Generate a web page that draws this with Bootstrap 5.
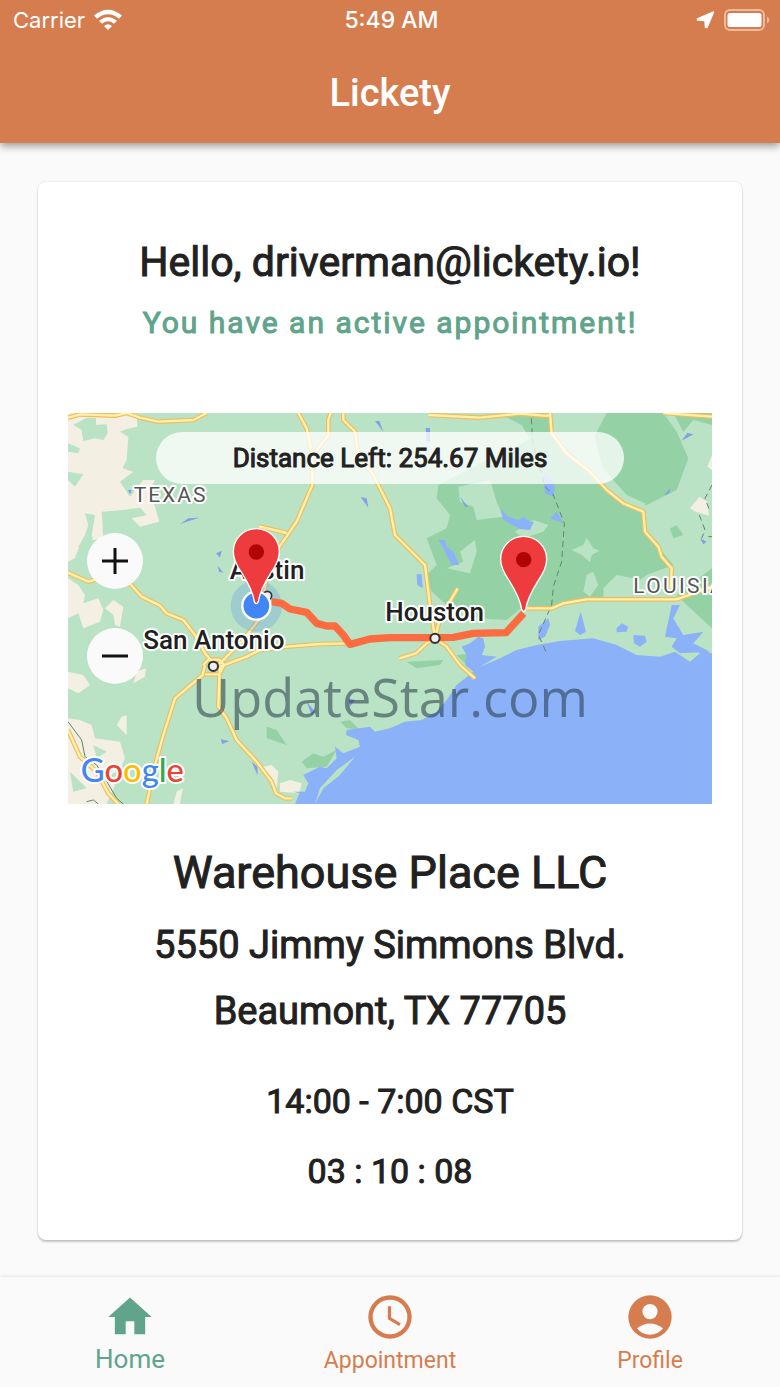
<!DOCTYPE html>
<html lang="en">
<head>
<meta charset="utf-8">
<meta name="viewport" content="width=device-width, initial-scale=1">
<title>Lickety</title>
<link href="https://cdn.jsdelivr.net/npm/bootstrap@5.3.0/dist/css/bootstrap.min.css" rel="stylesheet">
<style>
  :root { --clay: #d67d4f; --sage: #5fa48b; --ink: #212121; }
  body { font-family: Roboto, "Liberation Sans", sans-serif; background: #fafafa; color: var(--ink); }
  .app-header { background: var(--clay); color: #fff; box-shadow: 0 3px 8px rgba(0,0,0,.4); z-index: 1; }
  .status { font: 400 22px/40px Inter, sans-serif; padding: 0 10px 0 13px; }
  .status > * { flex: 1 1 0; }
  .status .clock { font-weight: 500; font-size: 23px; }
  .app-title { font-size: 38px; line-height: 100px; font-weight: 500; padding-top: 3px; }
  .visit { margin: 39px 38px 36px; padding: 55px 30px 34px; border: 0; border-radius: 8px; box-shadow: 0 2px 2px rgba(0,0,0,.2), 0 0 3px rgba(0,0,0,.1); }
  .heavy { -webkit-text-stroke: 1px currentColor; font-weight: 400; }
  .greeting { font-size: 41px; line-height: 50px; margin-bottom: 16px; }
  .notice { font-size: 30px; line-height: 40px; letter-spacing: 2px; color: var(--sage); margin-bottom: 70px; }
  .place { font-size: 45px; line-height: 52px; margin: 43px 0 13px; }
  .addr { font-size: 38px; line-height: 66px; margin-bottom: 22px; }
  .hours { font-size: 34px; line-height: 70px; }
  .map-art text { font-family: Roboto, sans-serif; }
  .halo { stroke: #fff; stroke-width: 12px; stroke-linejoin: round; paint-order: stroke; }
  .map-art .brand { font-family: Lato, sans-serif; font-weight: 500; }
  .map-art .stamp { font-family: "Open Sans", sans-serif; }
  .distance { margin: 19px 88px 49px; border-radius: 26px; line-height: 52px; font-size: 26px; background: rgba(255,255,255,.76); -webkit-text-stroke-width: 1px; }
  .zoomer { width: 56px; height: 56px; margin-left: 19px; background: #fafafa; border: 0; }
  .zoomer:first-child { margin-bottom: 39px; }
  .tabs { height: 110px; box-shadow: 0 -1px 3px rgba(0,0,0,.09); background: #fafafa; }
  .tabs a { color: var(--clay); font-size: 23px; line-height: 36px; padding-top: 14px; }
  .tabs a.active { color: var(--sage); font-size: 26px; line-height: 32px; }
</style>
</head>
<body class="min-vh-100 d-flex flex-column">
<header class="app-header position-relative text-center">
  <div class="status d-flex align-items-center">
    <div class="d-flex align-items-center gap-2">Carrier
      <svg width="30" height="22" viewBox="0 0 30 22"><path d="M1 6.500Q15-5 29 6.500L26 9.700Q15 1 4 9.700z" fill="#fff"/><path d="M6 11.700Q15 4.300 24 11.700L21 14.700Q15 10 9 14.700z" fill="#fff"/><path d="M15 21l-4-4Q15 13.500 19 17z" fill="#fff"/></svg>
    </div>
    <div class="clock">5:49 AM</div>
    <div class="d-flex align-items-center justify-content-end gap-2">
      <svg width="20" height="18" viewBox="0 0 20 18"><path d="M17.500 1L11 16.500H9.500L9 9.500 1.500 9V8z" fill="#fff" stroke="#fff" stroke-width="1.500" stroke-linejoin="round"/></svg>
      <svg width="46" height="22" viewBox="0 0 46 22"><rect x="1" y="1" width="39" height="20" rx="5" fill="none" stroke="#eabb9f" stroke-width="2"/><rect x="3.500" y="4" width="34" height="14" rx="2.500" fill="#fff"/><path d="M43 7.500q5 3.500 0 7z" fill="#eabb9f"/></svg>
    </div>
  </div>
  <h1 class="app-title m-0">Lickety</h1>
</header>

<main class="flex-grow-1">
  <section class="card visit text-center">
    <h2 class="greeting heavy">Hello, driverman@lickety.io!</h2>
    <p class="notice heavy">You have an active appointment!</p>
    <div class="position-relative">
      <svg class="map-art d-block w-100" viewBox="24 24 1932 1173" role="img" aria-label="Route from Austin to Beaumont">
        <defs>
          <g id="roads">
            <path d="M24 38L60 28 165 32 200 24 240 38 295 50 400 45 440 24"/>
            <path d="M715 24L740 70 757 150V240L710 350 655 430 620 520 600 640 545 710 470 785"/>
            <path d="M812 24L805 45V90L790 110 757 150M597 364L680 384"/>
            <path d="M850 24V45L885 80 895 150 940 210 955 240 990 310 1005 390 1095 480 1110 600 1125 700"/>
            <path d="M1105 30L1260 38 1380 26 1450 32H1470"/>
            <path d="M1470 24L1475 85 1520 145 1590 200 1640 255 1690 295 1750 320 1755 380 1795 425 1805 455 1835 490 1832 550"/>
            <path d="M1810 24L1956 35"/>
            <path d="M1391 610H1475L1510 595 1580 583H1850L1956 545"/>
            <path d="M24 503L85 530 160 510 200 525 245 575 300 602 320 625 370 645 405 690 435 745 470 785"/>
            <path d="M480 785L560 755 600 735 680 725 780 717 865 715"/>
            <path d="M435 780L428 810 410 825 345 880 310 990 285 1080 260 1197"/>
            <path d="M480 785L478 820 475 905 500 940 530 1005 590 1070 635 1130 648 1165 675 1180H695M435 808H478L492 780 478 764 445 764 430 780"/>
            <path d="M24 975L60 1055 110 1100 145 1165 175 1197"/>
            <path d="M1018 760L1068 745 1100 715 1125 700 1160 725 1200 780 1245 820M1193 550L1140 640 1125 700"/>
          </g>
        </defs>
        <path d="M24 24H1956V1197H24z" fill="#bae2c5"/>
        <g fill="#f3efe2">
          <path d="M24 24H230L232 65 200 72 180 80 205 95 200 165 188 190 220 200 180 230 210 275 250 225 285 225 265 260 285 305 298 350 240 365 215 340 260 330 240 308 190 315 125 320 130 400 100 405 60 420 45 460 24 470zM24 520L55 540 75 570 70 595 115 580 130 615 120 650 70 670 55 625 24 640zM135 610L160 585 190 605 180 665 165 660 160 630zM24 800L70 810 90 840 55 865 24 850zM24 940L60 945 95 960 105 1000 180 1010 195 1060 180 1095 150 1110 165 1140 140 1197H24zM170 960L185 935 200 930 200 990zM230 800L258 790 255 815 220 835zM610 1085L635 1080 655 1100 650 1155zM660 1135L690 1125 725 1135 718 1165 660 1160zM350 1160L368 1150 360 1197H340zM1890 310L1918 275 1942 290 1947 332 1910 322zM1942 185L1956 150V195z"/>
        </g>
        <path fill="#bae2c5" d="M40 60L80 38 108 40V60L140 58 143 85 130 105 105 100 70 108 65 75zM24 115L60 130 55 145 24 140zM24 200L70 208 45 245 24 225zM75 325L105 330 95 390 105 430 55 425 75 390 85 360zM100 1020L140 1040 110 1060zM30 1100L80 1150 40 1160z"/>
        <g fill="#94d2a5">
          <path d="M1315 24H1470L1480 90 1560 170 1650 260 1750 325 1750 380 1790 420 1840 480 1760 510 1720 540 1705 580 1560 590 1490 605 1380 612 1340 645 1250 640 1160 600 1115 560 1100 510 1130 480 1100 400 1160 370 1170 330 1130 280 1135 240 1270 170 1360 130 1410 100 1385 60z"/>
          <path d="M1640 24H1810L1850 80 1885 160 1850 255 1760 300 1700 280 1630 190 1600 100zM1840 24H1956V60L1900 45 1870 80zM1956 490L1850 570 1880 600 1956 670zM1830 370L1850 360 1870 390 1840 400zM840 950L870 945 900 975 860 970zM725 1070L760 1045 790 1055 830 1035 800 1085 740 1090zM620 965L650 975 680 1020 620 1000zM1040 770L1150 765 1140 780 1070 790zM1190 750L1230 745 1220 780z"/>
        </g>
        <g fill="#bae2c5">
          <path d="M1480 24H1640L1600 65 1620 180 1700 270 1755 295 1750 325 1650 260 1560 150 1480 80zM1195 245L1290 225 1310 290 1330 335 1250 345 1240 305 1200 290zM1365 380L1420 345 1465 360 1450 380 1390 400zM1200 440L1245 405 1250 440 1230 505 1160 490 1210 470zM1535 435L1570 420 1580 398 1600 430 1618 437 1595 450 1590 472 1565 450zM1580 510L1600 500 1615 540 1590 575 1570 560zM1630 550L1670 510 1720 520 1715 580H1630z"/>
        </g>
        <path fill="#8bb2f8" d="M705 1197L718 1165 700 1160 735 1160 745 1135 730 1110 780 1085 800 1090 830 1060 825 1025 850 1045 900 1025 895 1005 858 990 860 975 930 965 945 980 990 970 1035 950 1085 945 1130 920 1160 885 1190 840 1240 800 1215 780 1220 750 1205 725 1230 715 1255 695 1270 700 1275 725 1265 750 1310 755 1260 785 1320 760 1370 735 1430 720 1500 708 1600 700 1670 720 1730 750 1800 755 1845 740 1890 770 1920 745 1900 730 1956 745V1197zM1835 600L1860 600 1840 640 1870 690 1930 680 1900 715 1950 740 1860 745 1835 725 1850 700 1815 695zM1435 665L1465 640 1470 660 1455 695 1435 705zM1562 620L1578 680 1560 690 1545 678zM1670 670L1685 655 1705 665 1700 680 1670 682zM1720 690L1755 692 1760 710 1740 725 1722 715zM1320 310L1345 335 1375 345 1390 335 1410 350 1422 350 1410 375 1380 372 1330 345zM1135 405L1155 405 1160 425 1180 440 1198 480 1175 480 1150 430zM1070 508L1085 508 1088 550 1072 540zM1450 205L1460 205 1485 245 1480 275 1455 265zM1490 320L1510 355 1470 340z"/>
        <path fill="#829fe9" d="M945 48L958 48 970 80zM902 276L920 280 925 308zM360 358L385 340 418 338 380 350zM468 445L485 438 480 458zM474 483L490 503 477 500zM204 255L215 255 210 268zM482 1003L508 1008 487 1017zM575 1070L592 1085 593 1112zM740 890L765 920 755 930zM865 880L885 885 870 905zM1097 69H1110V110H1100zM1200 275L1225 307 1215 305zM1865 107L1882 84 1900 88zM1812 270L1832 250 1828 265zM1920 400L1940 410 1930 418z"/>
        <path d="M765 1197L780 1150 830 1095 885 1055 840 1110 790 1150z" fill="#bae2c5"/>
        <g fill="none" stroke="#63836f" stroke-width="3"><path stroke-dasharray="18 12" d="M1414 40L1418 110 1455 245 1480 270 1513 355 1505 470 1480 545 1475 600 1435 690 1458 740M1956 240L1935 280 1950 320M1918 330L1935 375 1925 400M1945 395H1956"/><path d="M24 950L65 1005 75 1055 110 1080 135 1120 170 1180 190 1197M80 1190L100 1185 115 1197"/></g>
        <g fill="none" stroke-linejoin="round"><use href="#roads" stroke="#eebd5c" stroke-width="14"/><use href="#roads" stroke="#fff1ad" stroke-width="7"/></g>
        <circle cx="589" cy="603" r="77" fill="#4285f4" fill-opacity=".22"/>
        <circle cx="622" cy="572" r="13" fill="#eee" stroke="#333" stroke-width="5"/>
        <path fill="none" stroke="#fc6c40" stroke-width="22" stroke-linejoin="round" d="M635 590L665 595 690 612 740 622 770 655 800 663 825 663 850 690 870 718 930 702 990 698 1125 698 1180 697 1240 685 1338 683 1391 625"/>
        <g font-size="78" fill="#202020" font-weight="500">
          <text class="halo" x="509" y="522">Austin</text>
          <text class="halo" x="976" y="647">Houston</text>
          <text class="halo" x="250" y="731">San Antonio</text>
        </g>
        <g font-size="63" fill="#555" letter-spacing="6"><text class="halo" x="221" y="290">TEXAS</text><text class="halo" x="1720" y="565" letter-spacing="7">LOUISIA</text></g>
        <g fill="#eee" stroke="#333" stroke-width="6"><circle cx="460" cy="784" r="14"/><circle cx="1125" cy="700" r="14"/></g>
        <circle cx="589" cy="602" r="42" fill="#4285f4" stroke="#fff" stroke-width="7"/>
        <g id="pin"><path d="M583 590Q578 555 545 503 520 468 520 440A69 69 0 0 1 658 440Q658 468 633 503 600 555 595 590 589 602 583 590z" fill="#ee3c3e" stroke="#fff" stroke-width="4"/><circle cx="589" cy="441" r="23" fill="#b00303"/></g>
        <use href="#pin" x="802" y="23"/>
        <text x="62" y="1132" font-size="98" class="halo brand"><tspan fill="#4285f4">G</tspan><tspan fill="#ea4335">o</tspan><tspan fill="#fbbc04">o</tspan><tspan fill="#4285f4">g</tspan><tspan fill="#34a853">l</tspan><tspan fill="#ea4335">e</tspan></text>
        <text x="990" y="935" text-anchor="middle" font-size="157" fill="#243746" fill-opacity=".55" class="stamp">UpdateStar.com</text>
      </svg>
      <div class="position-absolute top-0 start-0 w-100">
        <div class="distance">Distance Left: 254.67 Miles</div>
        <div class="d-flex flex-column">
          <button type="button" class="zoomer rounded-circle p-0" aria-label="Zoom in"><svg width="28" height="28" viewBox="0 0 28 28" stroke="#111" stroke-width="3"><path d="M1 14H27M14 1V27"/></svg></button>
          <button type="button" class="zoomer rounded-circle p-0" aria-label="Zoom out"><svg width="28" height="28" viewBox="0 0 28 28" stroke="#111" stroke-width="3"><path d="M1 14H27"/></svg></button>
        </div>
      </div>
    </div>
    <h3 class="place heavy">Warehouse Place LLC</h3>
    <div class="addr heavy">5550 Jimmy Simmons Blvd.<br>Beaumont, TX 77705</div>
    <div class="hours heavy">14:00 - 7:00 CST<br>03 : 10 : 08</div>
  </section>
</main>

<nav class="tabs row g-0 text-center">
  <a class="col active text-decoration-none" href="#home"><svg class="d-block mx-auto" width="52" height="52" viewBox="0 0 24 24" fill="currentColor"><path d="M10 20v-6h4v6h5v-8h3L12 3 2 12h3v8z"/></svg>Home</a>
  <a class="col text-decoration-none" href="#appointment"><svg class="d-block mx-auto" width="52" height="52" viewBox="0 0 24 24" fill="none" stroke="currentColor"><circle cx="12" cy="12" r="9" stroke-width="2"/><path d="M11.750 7v5.600L16.600 15.500" stroke-width="1.500"/></svg>Appointment</a>
  <a class="col text-decoration-none" href="#profile"><svg class="d-block mx-auto" width="52" height="52" viewBox="0 0 24 24"><circle cx="12" cy="12" r="10" fill="currentColor"/><g fill="#fafafa"><circle cx="12" cy="9.500" r="3.500"/><path d="M6 17.200Q9 15 12 15T18 17.200Q15.700 20.200 12 20.200T6 17.200z"/></g></svg>Profile</a>
</nav>
<script src="https://cdn.jsdelivr.net/npm/bootstrap@5.3.0/dist/js/bootstrap.bundle.min.js"></script>
</body>
</html>
